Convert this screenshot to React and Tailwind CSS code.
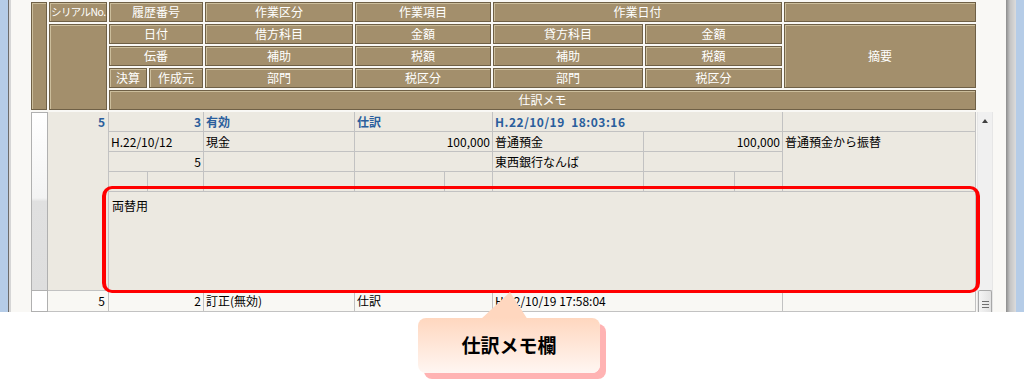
import React from "react";

const HEAD =
  "flex items-center justify-center bg-[#a38f6c] border border-[#6f6046] shadow-[inset_1px_1px_0_#cbbd9b] text-white text-[12px] leading-none whitespace-nowrap";

const SEL = "bg-[#ece9e1]";
const NORM = "bg-[#f9f8f4]";
const LINE = "border-l border-b border-[#c2c2c2]";
const BLUE = "font-bold text-[#2a5e9c]";

function H({ className = "", children }) {
  return <div className={`${HEAD} ${className}`}>{children}</div>;
}

function C({ className = "", bg = SEL, tone = "text-black", children }) {
  return (
    <div className={`${LINE} ${bg} ${tone} overflow-hidden whitespace-pre px-[2px] text-[12px] leading-[19px] ${className}`}>
      {children}
    </div>
  );
}

export default function App() {
  return (
    <div
      className="relative h-[390px] w-[1024px] overflow-hidden bg-white"
      style={{ fontFamily: '"Noto Sans CJK JP", "Noto Sans", sans-serif' }}
    >
      <div className="flex h-[312px]">
        <div className="w-[8px] bg-[#b5cce7]" />
        <div className="w-[1px] bg-[#6c6c6c]" />
        <div className="w-[2px] bg-[#d6d6d6]" />

        <div className="flex w-[995px] flex-col bg-[#f9f8f5] pl-[20px] pt-[2px]">
          {/* header */}
          <div className="grid w-[945px] grid-cols-[16px_58px_38px_54px_148px_136px_150px_137px_192px] grid-rows-[20px_20px_20px_20px_20px] gap-[2px]">
            <H className="col-start-1 row-start-1 row-span-5" />
            <H className="col-start-2 row-start-1 !justify-start pl-[1px]">
              <span className="text-[10.5px] tracking-[-0.6px]">シリアルNo.</span>
            </H>
            <H className="col-start-2 row-start-2 row-span-4" />
            <H className="col-start-3 col-span-2 row-start-1">履歴番号</H>
            <H className="col-start-5 row-start-1">作業区分</H>
            <H className="col-start-6 row-start-1">作業項目</H>
            <H className="col-start-7 col-span-2 row-start-1">作業日付</H>
            <H className="col-start-9 row-start-1" />

            <H className="col-start-3 col-span-2 row-start-2">日付</H>
            <H className="col-start-5 row-start-2">借方科目</H>
            <H className="col-start-6 row-start-2">金額</H>
            <H className="col-start-7 row-start-2">貸方科目</H>
            <H className="col-start-8 row-start-2">金額</H>
            <H className="col-start-9 row-start-2 row-span-3">摘要</H>

            <H className="col-start-3 col-span-2 row-start-3">伝番</H>
            <H className="col-start-5 row-start-3">補助</H>
            <H className="col-start-6 row-start-3">税額</H>
            <H className="col-start-7 row-start-3">補助</H>
            <H className="col-start-8 row-start-3">税額</H>

            <H className="col-start-3 row-start-4">決算</H>
            <H className="col-start-4 row-start-4">作成元</H>
            <H className="col-start-5 row-start-4">部門</H>
            <H className="col-start-6 row-start-4">税区分</H>
            <H className="col-start-7 row-start-4">部門</H>
            <H className="col-start-8 row-start-4">税区分</H>

            <H className="col-start-3 col-span-7 row-start-5">仕訳メモ</H>
          </div>

          {/* body */}
          <div className="mt-[2px] flex">
            <div className="grid w-[945px] grid-cols-[17px_60px_39px_56px_151px_90px_48px_151px_91px_48px_194px] grid-rows-[20px_20px_20px_20px_99px_21px]">
              {/* record 1 */}
              <div className="col-start-1 row-start-1 row-span-5 border border-[#b0b0b0] bg-[linear-gradient(to_bottom,#ffffff_0%,#f3f3f3_48%,#e0e0e0_50%,#dedede_100%)]" />
              <div className={`col-start-2 row-start-1 row-span-5 border-b border-[#c2c2c2] ${SEL} ${BLUE} pr-[3px] text-right text-[12px] leading-[19px]`}>
                5
              </div>
              <C tone={BLUE} className="col-start-3 col-span-2 row-start-1 text-right">3</C>
              <C tone={BLUE} className="col-start-5 row-start-1">有効</C>
              <C tone={BLUE} className="col-start-6 col-span-2 row-start-1">仕訳</C>
              <C tone={BLUE} className="col-start-8 col-span-3 row-start-1 tracking-[0.5px]">H.22/10/19  18:03:16</C>
              <C className="col-start-11 row-start-1 border-r" />

              <C className="col-start-3 col-span-2 row-start-2">H.22/10/12</C>
              <C className="col-start-5 row-start-2">現金</C>
              <C className="col-start-6 col-span-2 row-start-2 text-right">100,000</C>
              <C className="col-start-8 row-start-2">普通預金</C>
              <C className="col-start-9 col-span-2 row-start-2 text-right">100,000</C>
              <C className="col-start-11 row-start-2 row-span-3 border-r">普通預金から振替</C>

              <C className="col-start-3 col-span-2 row-start-3 text-right">5</C>
              <C className="col-start-5 row-start-3" />
              <C className="col-start-6 col-span-2 row-start-3" />
              <C className="col-start-8 row-start-3">東西銀行なんば</C>
              <C className="col-start-9 col-span-2 row-start-3" />

              <C className="col-start-3 row-start-4" />
              <C className="col-start-4 row-start-4" />
              <C className="col-start-5 row-start-4" />
              <C className="col-start-6 row-start-4" />
              <C className="col-start-7 row-start-4" />
              <C className="col-start-8 row-start-4" />
              <C className="col-start-9 row-start-4" />
              <C className="col-start-10 row-start-4" />

              <C className="col-start-3 col-span-9 row-start-5 border-r pl-[3px] pt-[4px]">両替用</C>

              {/* record 2 */}
              <div className="col-start-1 row-start-6 border border-t-0 border-[#b0b0b0] bg-white" />
              <div className={`col-start-2 row-start-6 border-b border-[#c2c2c2] ${NORM} pr-[3px] text-right text-[12px] leading-[19px] text-black`}>
                5
              </div>
              <C bg={NORM} className="col-start-3 col-span-2 row-start-6 text-right">2</C>
              <C bg={NORM} className="col-start-5 row-start-6">訂正(無効)</C>
              <C bg={NORM} className="col-start-6 col-span-2 row-start-6">仕訳</C>
              <C bg={NORM} className="col-start-8 col-span-3 row-start-6">H.22/10/19 17:58:04</C>
              <C bg={NORM} className="col-start-11 row-start-6 border-r" />
            </div>

            {/* scrollbar */}
            <div className="ml-[1px] flex w-[16px] flex-col justify-between border-x border-[#e6e6e6] bg-[#f0f0f0]">
              <div className="flex justify-center pt-[7px]">
                <div className="h-0 w-0 border-x-[3.5px] border-b-[4px] border-x-transparent border-b-[#404040]" />
              </div>
              <div className="flex h-[22px] flex-col items-center gap-[2px] rounded-t-[2px] border border-b-0 border-[#a8a8a8] bg-[linear-gradient(to_right,#f4f4f4,#e2e2e2)] pt-[10px]">
                <div className="h-[1px] w-[7px] bg-[#707070]" />
                <div className="h-[1px] w-[7px] bg-[#707070]" />
                <div className="h-[1px] w-[7px] bg-[#707070]" />
              </div>
            </div>
          </div>
        </div>

        <div className="w-[10px] bg-[linear-gradient(to_right,#8c8c8c,#c4c4c4_40%,#dcdcdc)]" />
        <div className="w-[8px] bg-[#b5cce7]" />
      </div>

      {/* red highlight around memo */}
      <div className="pointer-events-none absolute left-[102px] top-[186px] h-[107px] w-[878px] rounded-[10px] border-x-[4px] border-y-[3px] border-[#ff0000]" />

      {/* callout */}
      <svg className="absolute left-[478px] top-[291px]" width="54" height="30" viewBox="0 0 54 30">
        <polygon points="2,29 32,1 50,29" fill="#ffd7bf" />
      </svg>
      <div className="absolute left-[418px] top-[318px] flex h-[55px] w-[182px] items-center justify-center rounded-[8px] bg-[linear-gradient(to_bottom,#ffd7bf,#fff6f2)] shadow-[6px_6px_0_#ffb3b3]">
        <span className="text-[19px] font-bold text-black">仕訳メモ欄</span>
      </div>
    </div>
  );
}
